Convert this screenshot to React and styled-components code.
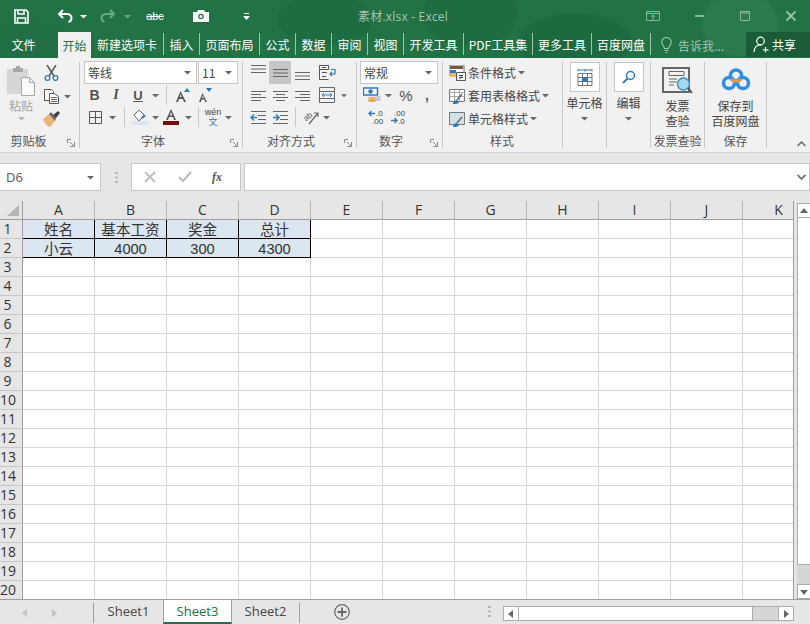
import React from 'react';
import styled, { createGlobalStyle } from 'styled-components';

const CJK = '"Noto Sans CJK SC", "Noto Sans", sans-serif';
const UI = '"Open Sans", "Noto Sans CJK SC", sans-serif';
const SANS = '"Liberation Sans", sans-serif';
const SERIF = '"Liberation Serif", serif';

const Global = createGlobalStyle`
  html, body { margin: 0; padding: 0; background: #e6e6e6; overflow: hidden; }
  * { box-sizing: border-box; }
`;

const Page = styled.div`
  width: 810px;
  height: 624px;
  display: flex;
  flex-direction: column;
  overflow: hidden;
  font-family: ${CJK};
  font-size: 12px;
  color: #444;
`;

const Header = styled.div`
  height: 58px;
  flex: none;
  color: #fff;
  background-color: #217346;
  background-image:
    radial-gradient(ellipse 50px 26px at 325px 20px, #1f6b42 90%, transparent 100%),
    radial-gradient(ellipse 50px 34px at 470px 14px, #1f6b42 90%, transparent 100%),
    radial-gradient(ellipse 60px 30px at 575px 42px, #1e6a40 90%, transparent 100%),
    radial-gradient(ellipse 40px 34px at 740px 24px, #2a7a4e 90%, transparent 100%),
    radial-gradient(ellipse 50px 30px at 30px 50px, #226f45 90%, transparent 100%);
`;

const TitleRow = styled.div`
  height: 32px;
  display: flex;
  align-items: center;
`;

const QatSlot = styled.div`
  width: ${p => p.$w}px;
  height: 32px;
  flex: none;
  margin-left: ${p => p.$ml || 0}px;
  display: flex;
  align-items: center;
  justify-content: center;
  opacity: ${p => (p.$dim ? 0.35 : 1)};
`;

const AbcSlot = styled(QatSlot)`
  font-family: ${SANS};
  font-size: 11px;
  text-decoration: line-through;
`;

const DocTitle = styled.div`
  width: 362px;
  flex: none;
  padding-left: 90px;
  font-family: ${UI};
  font-size: 12px;
  color: #a7c6b4;
  letter-spacing: 0.2px;
  white-space: nowrap;
`;

const TabRow = styled.div`
  height: 26px;
  display: flex;
  align-items: flex-start;
`;

const MenuTab = styled.div`
  width: ${p => p.$w}px;
  height: ${p => (p.$active ? 26 : 22)}px;
  margin-top: ${p => (p.$active ? 0 : 1)}px;
  flex: none;
  display: flex;
  align-items: center;
  justify-content: center;
  white-space: nowrap;
  font-size: 12px;
  color: ${p => (p.$active ? '#217346' : '#fff')};
  background: ${p => (p.$active ? '#f1f1f1' : 'transparent')};
  border-right: ${p => (p.$sep ? '1px solid #9dc2ad' : 'none')};
`;

const Hint = styled.div`
  width: 95px;
  height: 26px;
  flex: none;
  display: flex;
  align-items: center;
  padding-left: 10px;
  gap: 6px;
  color: #a7c6b4;
`;

const ShareBox = styled.div`
  width: 64px;
  height: 25px;
  flex: none;
  display: flex;
  align-items: center;
  gap: 2px;
  padding-left: 7px;
  background: #1a5c38;
  color: #fff;
`;

const Ribbon = styled.div`
  position: relative;
  height: 95px;
  flex: none;
  display: flex;
  background: #f1f1f1;
  border-bottom: 1px solid #d4d4d4;
`;

const Group = styled.div`
  position: relative;
  width: ${p => p.$w}px;
  flex: none;
  display: flex;
  flex-direction: column;
  padding: 3px 0 0 ${p => p.$pl || 0}px;
`;

const GroupBody = styled.div`
  flex: 1;
  display: flex;
  flex-direction: column;
`;

const GroupLabel = styled.div`
  height: 21px;
  flex: none;
  line-height: 19px;
  text-align: center;
  color: #555;
  font-size: 12px;
  white-space: nowrap;
  padding-right: ${p => p.$pr || 0}px;
`;

const GroupSep = styled.div`
  width: 1px;
  flex: none;
  margin: 4px 0 4px;
  background: #c9c9c9;
`;

const Launcher = styled.svg`
  position: absolute;
  right: 4px;
  bottom: 5px;
`;

const CollapseArrow = styled.svg`
  position: absolute;
  right: 4px;
  bottom: 5px;
`;

const ToolRow = styled.div`
  height: ${p => p.$h || 22}px;
  display: flex;
  align-items: center;
  padding-left: ${p => p.$pl || 0}px;
`;

const Tool = styled.div`
  width: ${p => p.$w}px;
  height: ${p => p.$h || 22}px;
  flex: none;
  margin-left: ${p => p.$ml || 0}px;
  display: flex;
  align-items: center;
  justify-content: center;
  background: ${p => (p.$on ? '#c6c6c6' : 'transparent')};
  color: #444;
`;

const Glyph = styled(Tool)`
  font-family: ${p => p.$font || SANS};
  font-size: ${p => p.$size || 14}px;
  font-weight: ${p => (p.$bold ? 700 : 400)};
  font-style: ${p => (p.$italic ? 'italic' : 'normal')};
  text-decoration: ${p => (p.$under ? 'underline' : 'none')};
  color: #505050;
`;

const PhoneticTool = styled(Tool)`
  flex-direction: column;
  font-size: 9px;
  line-height: 10px;
  color: #2d7ab8;
`;

const Pinyin = styled.span`
  font-family: ${SANS};
  color: #444;
`;

const ToolSep = styled.div`
  width: 1px;
  height: 20px;
  flex: none;
  margin: 0 ${p => p.$mx || 0}px;
  background: #c9c9c9;
`;

const Select = styled.div`
  width: ${p => p.$w}px;
  height: 23px;
  flex: none;
  display: flex;
  align-items: center;
  justify-content: space-between;
  padding: 0 5px 0 3px;
  background: #fff;
  border: 1px solid #c6c6c6;
  margin-right: ${p => p.$mr || 0}px;
  font-size: 12px;
  color: #444;
`;

const Paste = styled.div`
  width: 36px;
  margin: 5px 0 0 3px;
  display: flex;
  flex-direction: column;
  align-items: center;
  color: #a3a3a3;
  font-size: 12px;
  line-height: 16px;
  gap: 2px;
`;

const ClipColumn = styled.div`
  display: flex;
  flex-direction: column;
  margin-left: 2px;
`;

const ClipRow = styled.div`
  display: flex;
  flex-direction: row;
`;

const StyleRow = styled.div`
  height: 23px;
  display: flex;
  align-items: center;
  gap: 2px;
  white-space: nowrap;
  color: #444;
`;

const BigBox = styled.div`
  width: 30px;
  height: 30px;
  display: flex;
  align-items: center;
  justify-content: center;
  background: #fff;
  border: 1px solid #c6c6c6;
  margin: 1px 0 3px;
`;

const BigColumn = styled.div`
  display: flex;
  flex-direction: column;
  align-items: center;
  flex: 1;
  line-height: 15px;
  color: #444;
  text-align: center;
`;

const BigIcon = styled.div`
  height: 37px;
  flex: none;
  padding-top: ${p => p.$pt}px;
`;

const CaretLine = styled.div`
  height: 16px;
  display: flex;
  align-items: center;
`;

const FormulaBar = styled.div`
  height: 48px;
  flex: none;
  display: flex;
  align-items: flex-start;
  padding-top: 10px;
  background: #e6e6e6;
`;

const NameBox = styled.div`
  width: 101px;
  height: 28px;
  flex: none;
  display: flex;
  align-items: center;
  justify-content: space-between;
  padding: 0 6px;
  background: #fff;
  border: 1px solid #c6c6c6;
  border-left: none;
  font-family: ${UI};
  font-size: 13px;
  color: #555;
`;

const Grip = styled.div`
  width: 30px;
  height: 28px;
  flex: none;
  display: flex;
  align-items: center;
  justify-content: center;
`;

const FxBox = styled.div`
  width: 110px;
  height: 28px;
  flex: none;
  display: flex;
  align-items: center;
  padding-left: 12px;
  gap: 22px;
  background: #fff;
  border: 1px solid #c6c6c6;
`;

const FxLabel = styled.span`
  margin-left: -2px;
  font-family: ${SERIF};
  font-style: italic;
  font-weight: bold;
  font-size: 12px;
  color: #555;
`;

const FormulaInput = styled.div`
  width: 566px;
  height: 28px;
  flex: none;
  margin-left: 3px;
  display: flex;
  align-items: center;
  justify-content: flex-end;
  padding-right: 3px;
  background: #fff;
  border: 1px solid #c6c6c6;
`;

const SheetArea = styled.div`
  flex: 1;
  min-height: 0;
  display: flex;
  background: #fff;
`;

const Sheet = styled.div`
  width: 794px;
  flex: none;
  display: grid;
  grid-template-columns: 23px repeat(11, 72px);
  grid-auto-rows: 19px;
  overflow: hidden;
  border-right: 1px solid #9f9f9f;
`;

const Corner = styled.div`
  background: #e6e6e6;
  border-right: 1px solid #9f9f9f;
  border-bottom: 1px solid #9f9f9f;
  height: 19px;
  display: flex;
  align-items: flex-end;
  justify-content: flex-end;
  padding: 0 3px 3px 0;
`;

const ColHead = styled.div`
  background: #e6e6e6;
  border-right: 1px solid #b4b4b4;
  border-bottom: 1px solid #9f9f9f;
  text-align: center;
  font-size: 14px;
  line-height: 18px;
  color: #333;
  font-family: ${UI};
`;

const RowHead = styled.div`
  background: #e6e6e6;
  border-right: 1px solid #9f9f9f;
  border-bottom: 1px solid #c6c6c6;
  text-align: center;
  padding-right: 7px;
  font-size: 14px;
  line-height: 18px;
  color: #333;
  font-family: ${UI};
  white-space: nowrap;
`;

const Cell = styled.div`
  border-right: 1px solid ${p => (p.$data ? '#000' : '#d4d4d4')};
  border-bottom: 1px solid ${p => (p.$data ? '#000' : '#d4d4d4')};
  background: ${p => (p.$data ? '#dce6f1' : '#fff')};
  text-align: center;
  font-size: 14.6px;
  line-height: 18px;
  padding-top: ${p => (p.$num ? 1 : 0)}px;
  color: #333;
  white-space: nowrap;
  font-family: ${p => (p.$num ? SANS : CJK)};
`;

const VScroll = styled.div`
  flex: 1;
  display: flex;
  flex-direction: column;
  padding: 2px 0 0 3px;
  background: #e6e6e6;
`;

const VButton = styled.div`
  height: 15px;
  flex: none;
  display: flex;
  align-items: center;
  justify-content: center;
  background: #fff;
  border: 1px solid #ababab;
  border-right: none;
`;

const VThumb = styled.div`
  height: 347px;
  flex: none;
  background: #fff;
  border-left: 1px solid #ababab;
  border-bottom: 1px solid #ababab;
`;

const VTrack = styled.div`
  flex: 1;
  background: #d6d6d6;
`;

const BottomBar = styled.div`
  height: 25px;
  flex: none;
  display: flex;
  background: #e6e6e6;
  border-top: 1px solid #9f9f9f;
`;

const NavArrows = styled.div`
  width: 94px;
  height: 20px;
  flex: none;
  display: flex;
  align-items: center;
  gap: 21px;
  padding-left: 21px;
  margin-top: 3px;
  border-right: 1px solid #9f9f9f;
`;

const SheetTab = styled.div`
  width: ${p => p.$w}px;
  height: ${p => (p.$active ? 25 : 22)}px;
  flex: none;
  display: flex;
  align-items: center;
  justify-content: center;
  margin-top: ${p => (p.$active ? -1 : 0)}px;
  font-family: ${UI};
  font-size: 13px;
  color: ${p => (p.$active ? '#217346' : '#444')};
  background: ${p => (p.$active ? '#fff' : 'transparent')};
  border-top: ${p => (p.$active ? '1px solid #9f9f9f' : 'none')};
  border-left: ${p => (p.$active ? '1px solid #9f9f9f' : 'none')};
  border-right: ${p => (p.$active ? '1px solid #9f9f9f' : 'none')};
  border-bottom: ${p => (p.$active ? '2px solid #217346' : 'none')};
`;

const TabEnd = styled.div`
  width: 1px;
  height: 20px;
  flex: none;
  margin-top: 3px;
  background: #9f9f9f;
`;

const AddSheet = styled.div`
  width: 84px;
  height: 23px;
  flex: none;
  display: flex;
  align-items: center;
  justify-content: center;
`;

const BarGrip = styled.div`
  width: 119px;
  height: 23px;
  flex: none;
  display: flex;
  align-items: center;
  justify-content: flex-end;
  padding-right: 12px;
`;

const HScroll = styled.div`
  width: 291px;
  height: 15px;
  flex: none;
  margin-top: 6px;
  display: flex;
  background: #d6d6d6;
  border: 1px solid #ababab;
`;

const HButton = styled.div`
  width: 15px;
  flex: none;
  display: flex;
  align-items: center;
  justify-content: center;
  background: #fff;
  border-${p => p.$side}: 1px solid #ababab;
`;

const HThumb = styled.div`
  width: 234px;
  flex: none;
  background: #fff;
  border-right: 1px solid #ababab;
`;

const HTrack = styled.div`
  flex: 1;
`;

/* small drawings */

const Caret = ({ c = '#666', s = 5 }) => (
  <svg width={s * 1.4} height={s} viewBox="0 0 7 5"><path d="M0 1h7L3.500 4.600z" fill={c} /></svg>
);

const SaveIcon = () => (
  <svg width="15" height="15" viewBox="0 0 15 15" fill="none" stroke="#fff" strokeWidth="1.600">
    <path d="M1 1h11l2 2v11H1z" />
    <path d="M4 1v4h6V1M3.500 14V9h8v5" />
  </svg>
);

const UndoIcon = () => (
  <svg width="16" height="14" viewBox="0 0 16 14" fill="none" stroke="#fff" strokeWidth="2">
    <path d="M6 1 2 5l4 4" />
    <path d="M2 5h8c3 0 4.500 2 4.500 4s-1 3.500-3 4" />
  </svg>
);

const RedoIcon = () => (
  <svg width="16" height="14" viewBox="0 0 16 14" fill="none" stroke="#fff" strokeWidth="2">
    <path d="m10 1 4 4-4 4" />
    <path d="M14 5H6C3 5 1.500 7 1.500 9s1 3.500 3 4" />
  </svg>
);

const CameraIcon = () => (
  <svg width="16" height="12" viewBox="0 0 16 12">
    <path d="M0 2h4l1-2h6l1 2h4v10H0z" fill="#fff" />
    <circle cx="8" cy="6.500" r="2.800" fill="#217346" />
    <circle cx="8" cy="6.500" r="1.500" fill="#fff" />
  </svg>
);

const QatMenu = () => (
  <svg width="7" height="7" viewBox="0 0 7 7" fill="#fff"><path d="M1 0h5v1H1zM0 3h7L3.500 7z" /></svg>
);

const RestoreIcon = () => (
  <svg width="14" height="10" viewBox="0 0 14 10" fill="none" stroke="#8fb5a0">
    <path d="M.5.500h13v9H.500zM.5 2.500h13M7 9V4.500M5 6l2-2 2 2" />
  </svg>
);

const MaxIcon = () => (
  <svg width="10" height="10" viewBox="0 0 10 10" fill="none" stroke="#8fb5a0">
    <path d="M.5.500h9v9h-9zM.5 2h9" />
  </svg>
);

const MinIcon = () => <svg width="9" height="2" viewBox="0 0 9 2"><path d="M0 0h9v2H0z" fill="#8fb5a0" /></svg>;

const CloseIcon = () => (
  <svg width="10" height="10" viewBox="0 0 10 10" fill="none" stroke="#a3c4b1" strokeWidth="1.800"><path d="m.5.500 9 9m0-9-9 9" /></svg>
);

const BulbIcon = () => (
  <svg width="11" height="17" viewBox="0 0 11 17" fill="none" stroke="#a7c6b4" strokeWidth="1.100">
    <path d="M3.500 11.500C3 9 .8 8 .8 5.200a4.700 4.700 0 0 1 9.400 0c0 2.800-2.200 3.800-2.700 6.300z" />
    <path d="M3.500 13.500h4M4.500 15.500h2" />
  </svg>
);

const PersonIcon = () => (
  <svg width="17" height="17" viewBox="0 0 17 17" fill="none" stroke="#fff" strokeWidth="1.200">
    <circle cx="7.500" cy="5" r="3.800" />
    <path d="M1 16c0-4 2.500-7 5.500-7h2M12.500 11v5.500M10 13.800h5.500" />
  </svg>
);

const PasteIcon = () => (
  <svg width="28" height="30" viewBox="0 0 28 30">
    <path d="M0 3h21v25H0z" fill="#d6d6d6" />
    <path d="M6 2h3V0h4v2h3v4H6z" fill="#a8a8a8" />
    <path d="M14.500 11.500h8l5 5v13h-13z" fill="#fafafa" stroke="#a8a8a8" />
    <path d="M22.500 11.500v5h5" fill="none" stroke="#a8a8a8" />
  </svg>
);

const CutIcon = () => (
  <svg width="15" height="16" viewBox="0 0 15 16" fill="none">
    <path d="m3 0 7 11M12 0 5 11" stroke="#555" strokeWidth="1.500" />
    <circle cx="3.500" cy="13" r="2.400" stroke="#2d7ab8" strokeWidth="1.300" />
    <circle cx="11.500" cy="13" r="2.400" stroke="#2d7ab8" strokeWidth="1.300" />
  </svg>
);

const CopyIcon = () => (
  <svg width="15" height="15" viewBox="0 0 15 15" fill="#fff" stroke="#555">
    <path d="M.5.500h7l2 2v9h-9z" />
    <path d="M5.500 4.500h5l4 3v7h-9z" />
    <path d="M7 8.500h6M7 10.500h6M7 12.500h6" stroke="#2d7ab8" />
  </svg>
);

const BrushIcon = () => (
  <svg width="17" height="16" viewBox="0 0 17 16">
    <path d="M0 8 6 3l6 7-5 6C5 16 0 11 0 8z" fill="#eab676" />
    <path d="m6 3 2-2 5 6-1 3z" fill="#666" />
    <path d="m10 4 5-4 2 2-4 5z" fill="#444" />
  </svg>
);

const BorderIcon = () => (
  <svg width="13" height="13" viewBox="0 0 13 13" fill="none" stroke="#555"><path d="M.5.500h12v12H.500zM6.500.5v12M.5 6.500h12" /></svg>
);

const FillIcon = () => (
  <svg width="17" height="16" viewBox="0 0 17 16">
    <path d="M3 6 8 1l5 5-5 6z" fill="#fff" stroke="#666" />
    <path d="M8 1 13 6l-3 3 1 1 4-3z" fill="#2d7ab8" />
    <path d="M1 12h16v4H1z" fill="#dce6f1" />
  </svg>
);

const FontColor = () => (
  <svg width="16" height="16" viewBox="0 0 16 16">
    <path d="M8 0 3 11h2l1-3h4l1 3h2zM6.800 6.500 8 3l1.200 3.500z" fill="#555" />
    <path d="M0 12h16v4H0z" fill="#7a0a0a" />
  </svg>
);

const GrowFont = ({ up }) => (
  <svg width="15" height="14" viewBox="0 0 15 14">
    <path d={up ? 'M4.500 3 0 14h2l1-3h4l1 3h2zM3.700 9l1-3 1 3z' : 'M4.500 5 1 14h1.800l.7-2.500h3l.8 2.500H9zM4 10l1-3 .8 3z'} fill="#555" />
    <path d={up ? 'M8 4h6l-3-4z' : 'M8 0h6l-3 4z'} fill="#2d7ab8" />
  </svg>
);

const Lines = ({ y0 = 3, rows = [[0, 15], [0, 15], [0, 15]], step = 3.500, w = 15, h = 15 }) => (
  <svg width={w} height={h} viewBox={`0 0 ${w} ${h}`} stroke="#666">
    {rows.map(([a, b], i) => <path key={i} d={`M${a} ${y0 + i * step + 0.500}H${b}`} />)}
  </svg>
);

const WrapIcon = () => (
  <svg width="17" height="16" viewBox="0 0 17 16" fill="none">
    <path d="M.5.500h9v4h-9zM.5 4.500v10h9" stroke="#555" />
    <path d="M3 2.500h4M3 7.500h5M3 11.500h4" stroke="#555" />
    <path d="M12 4.500h4V9h-5m2-2-2 2 2 2" stroke="#2d7ab8" strokeWidth="1.200" />
  </svg>
);

const MergeIcon = () => (
  <svg width="16" height="16" viewBox="0 0 16 16" fill="none">
    <path d="M.5.500h15v15H.500zM.5 4.500h15M.5 11.500h15" stroke="#666" />
    <path d="M3 8h10M5 6 3 8l2 2m6-4 2 2-2 2" stroke="#2d7ab8" />
  </svg>
);

const IndentIcon = ({ out }) => (
  <svg width="16" height="13" viewBox="0 0 16 13" fill="none">
    <path d="M1 .5h15M8 4.500h8M8 8.500h8M1 12.500h15" stroke="#666" />
    {out
      ? <path d="M7 6.500H1m3-3-3 3 3 3" stroke="#2d7ab8" strokeWidth="1.500" />
      : <path d="M1 6.500h6m-3-3 3 3-3 3" stroke="#2d7ab8" strokeWidth="1.500" />}
  </svg>
);

const AngleIcon = () => (
  <svg width="18" height="16" viewBox="0 0 18 16" fill="none">
    <text x="1" y="10" fontSize="8" fontFamily="Liberation Sans" fill="#555" transform="rotate(-40 6 7)">ab</text>
    <path d="M7 15 16 4m-4 0h4v4" stroke="#666" strokeWidth="1.200" />
  </svg>
);

const MoneyIcon = () => (
  <svg width="18" height="17" viewBox="0 0 18 17">
    <path d="M.5 1h14v7H.500z" fill="#fff" stroke="#2d7ab8" strokeWidth="1.500" />
    <circle cx="7.500" cy="4.500" r="2.200" fill="#2d7ab8" />
    <ellipse cx="9" cy="11" rx="4" ry="1.500" fill="#eab676" />
    <ellipse cx="9" cy="13.500" rx="4" ry="1.500" fill="#e5a552" />
    <ellipse cx="15" cy="10" rx="3" ry="1.300" fill="#ccc" />
    <ellipse cx="15" cy="12.500" rx="3" ry="1.300" fill="#bbb" />
  </svg>
);

const DecimalIcon = ({ more }) => (
  <svg width="16" height="15" viewBox="0 0 16 15" fill="none">
    <path d={more ? 'M7 3.500H1m2.500-2.500L1 3.500 3.500 6' : 'M1 10.500h6m-2.500-2.500L7 10.500 4.500 13'} stroke="#2d7ab8" strokeWidth="1.300" />
    <text x={more ? 8 : 4} y="6" fontSize="8" fontFamily="Liberation Sans" fill="#444">{more ? '.0' : '.00'}</text>
    <text x={more ? 4 : 8} y="14" fontSize="8" fontFamily="Liberation Sans" fill="#444">{more ? '.00' : '.0'}</text>
  </svg>
);

const CondIcon = () => (
  <svg width="17" height="16" viewBox="0 0 17 16">
    <path d="M0 0h15v10H0z" fill="#fff" stroke="#777" />
    <path d="M1 1h13v3H1z" fill="#7a5a3a" />
    <path d="M1 5h6v3H1z" fill="#2d7ab8" />
    <path d="M1 8h6v4H1z" fill="#eab676" />
    <path d="M7.500 7.500h9v8h-9z" fill="#fff" stroke="#555" />
    <path d="M10 10.500h4M10 12.500h4M13 9.500l-2 4.500" stroke="#555" fill="none" />
  </svg>
);

const TableIcon = ({ fill }) => (
  <svg width="17" height="16" viewBox="0 0 17 16" fill="none">
    <path d="M.5 1.500h15v12H.500z" fill={fill} stroke="#777" />
    <path d="M.5 4.500h15M.5 8.500h15M5.500 1.500v12M10.500 1.500v12" stroke={fill === '#fff' ? '#aaa' : 'none'} />
    <path d="m13 6-5 6" stroke="#666" strokeWidth="1.500" />
    <path d="M4 16c0-3 2-4 4-4l2 2c-1 2-3 2-6 2z" fill="#2d7ab8" />
  </svg>
);

const CellsIcon = () => (
  <svg width="16" height="17" viewBox="0 0 16 17" fill="none" stroke="#777">
    <path d="M1 1h14M1 0v2.500M8 0v2.500M15 0v2.500" stroke="#2d7ab8" />
    <path d="M1 4.500h14v12H1zM1 8.500h14M1 12.500h14M5.500 4.500v12M10.500 4.500v12" />
    <path d="M5.500 8.500h5v4h-5z" fill="#2d7ab8" stroke="#2d7ab8" />
  </svg>
);

const SearchIcon = () => (
  <svg width="14" height="15" viewBox="0 0 14 15" fill="none">
    <circle cx="8.500" cy="5.500" r="4" stroke="#2d7ab8" strokeWidth="1.500" />
    <path d="M5.500 8.500 1 13" stroke="#2d7ab8" strokeWidth="2" />
  </svg>
);

const InvoiceIcon = () => (
  <svg width="32" height="27" viewBox="0 0 32 27" fill="none">
    <path d="M1 1h26v24H1z" stroke="#666" strokeWidth="2" />
    <path d="M1 4v18" stroke="#666" strokeWidth="2" strokeDasharray="2 2" />
    <path d="M7 4.500h15v4H7z" stroke="#666" />
    <path d="M7 12h8M7 15h8M7 18h5" stroke="#666" />
    <circle cx="21.500" cy="17" r="6" fill="#a8d8f0" stroke="#3d8fc4" strokeWidth="1.500" />
    <path d="m26 21 4 5" stroke="#555" strokeWidth="2" />
  </svg>
);

const BaiduIcon = () => (
  <svg width="30" height="23" viewBox="0 0 30 23" fill="none">
    <circle cx="8" cy="15" r="5.500" stroke="#2f8fe0" strokeWidth="3.500" />
    <circle cx="22" cy="15" r="5.500" stroke="#2f8fe0" strokeWidth="3.500" />
    <circle cx="15" cy="7.500" r="5.500" stroke="#2f8fe0" strokeWidth="3.500" />
    <path d="M10 11c2 3 8 3 10 0" stroke="#e49a55" strokeWidth="3" />
  </svg>
);

const XMark = () => (
  <svg width="12" height="12" viewBox="0 0 12 12" fill="none" stroke="#bdbdbd" strokeWidth="1.800"><path d="m1 1 10 10m0-10L1 11" /></svg>
);

const CheckMark = () => (
  <svg width="14" height="12" viewBox="0 0 14 12" fill="none" stroke="#bdbdbd" strokeWidth="2.200"><path d="m1 6 4 4 8-9" /></svg>
);

const GripDots = ({ c = '#b5b5b5' }) => (
  <svg width="3" height="11" viewBox="0 0 3 11" fill={c}><path d="M0 0h3v2H0zM0 4.500h3v2H0zM0 9h3v2H0z" /></svg>
);

const Tri = ({ dir, c = '#666', s = 8 }) => {
  const d = { up: 'M0 6h8L4 1z', down: 'M0 2h8L4 7z', left: 'M6 0v8L1 4z', right: 'M2 0v8l5-4z' }[dir];
  return <svg width={s} height={s} viewBox="0 0 8 8"><path d={d} fill={c} /></svg>;
};

const LauncherIcon = () => (
  <Launcher width="8" height="8" viewBox="0 0 8 8" fill="none" stroke="#888">
    <path d="M.5 4V.5H4M7.500 3v4.500H3M3 3l4 4" />
  </Launcher>
);

const columns = ['A', 'B', 'C', 'D', 'E', 'F', 'G', 'H', 'I', 'J', 'K'];
const tabs = [
  ['新建选项卡', 73], ['插入', 36], ['页面布局', 60], ['公式', 36], ['数据', 36], ['审阅', 36],
  ['视图', 36], ['开发工具', 60], ['PDF工具集', 69], ['更多工具', 59], ['百度网盘', 59],
];
const data = [
  ['姓名', '基本工资', '奖金', '总计'],
  ['小云', '4000', '300', '4300'],
];
const rows = Array.from({ length: 20 }, (_, i) => i);

const App = () => (
  <Page>
    <Global />
    <Header>
      <TitleRow>
        <QatSlot $w={42}><SaveIcon /></QatSlot>
        <QatSlot $w={28} $ml={9}><UndoIcon /></QatSlot>
        <QatSlot $w={8}><Caret c="#fff" /></QatSlot>
        <QatSlot $w={28} $ml={7} $dim><RedoIcon /></QatSlot>
        <QatSlot $w={10} $dim><Caret c="#fff" /></QatSlot>
        <AbcSlot $w={46}>abc</AbcSlot>
        <QatSlot $w={46}><CameraIcon /></QatSlot>
        <QatSlot $w={44}><QatMenu /></QatSlot>
        <DocTitle>素材.xlsx - Excel</DocTitle>
        <QatSlot $w={46}><RestoreIcon /></QatSlot>
        <QatSlot $w={46}><MinIcon /></QatSlot>
        <QatSlot $w={46}><MaxIcon /></QatSlot>
        <QatSlot $w={46}><CloseIcon /></QatSlot>
      </TitleRow>
      <TabRow>
        <MenuTab $w={47}>文件</MenuTab>
        <MenuTab $w={11} />
        <MenuTab $w={33} $active>开始</MenuTab>
        {tabs.map(([label, w]) => <MenuTab key={label} $w={w} $sep>{label}</MenuTab>)}
        <Hint><BulbIcon />告诉我...</Hint>
        <ShareBox><PersonIcon />共享</ShareBox>
      </TabRow>
    </Header>

    <Ribbon>
      <Group $w={79}>
        <GroupBody>
          <ClipRow>
            <Paste>
              <PasteIcon />
              <span>粘贴</span>
              <Caret c="#b5b5b5" />
            </Paste>
            <ClipColumn>
              <Tool $w={20} $h={24}><CutIcon /></Tool>
              <ToolRow $h={22}><Tool $w={20}><CopyIcon /></Tool><Tool $w={12}><Caret /></Tool></ToolRow>
              <Tool $w={20} $h={24}><BrushIcon /></Tool>
            </ClipColumn>
          </ClipRow>
        </GroupBody>
        <GroupLabel $pr={22}>剪贴板</GroupLabel>
        <LauncherIcon />
      </Group>
      <GroupSep />

      <Group $w={162} $pl={4}>
        <GroupBody>
          <ToolRow $h={23}>
            <Select $w={113} $mr={1}>等线<Caret /></Select>
            <Select $w={40}>11<Caret /></Select>
          </ToolRow>
          <ToolRow>
            <Glyph $w={21} $bold>B</Glyph>
            <Glyph $w={22} $font={SERIF} $bold $italic>I</Glyph>
            <Glyph $w={22} $bold $under $size={13}>U</Glyph>
            <Tool $w={12}><Caret /></Tool>
            <ToolSep $mx={5} />
            <Tool $w={22}><GrowFont up /></Tool>
            <Tool $w={22}><GrowFont /></Tool>
          </ToolRow>
          <ToolRow>
            <Tool $w={16} $ml={3}><BorderIcon /></Tool>
            <Tool $w={18}><Caret /></Tool>
            <ToolSep $mx={3} />
            <Tool $w={22}><FillIcon /></Tool>
            <Tool $w={10}><Caret /></Tool>
            <Tool $w={22}><FontColor /></Tool>
            <Tool $w={12}><Caret /></Tool>
            <ToolSep $mx={4} />
            <PhoneticTool $w={20}>
              <Pinyin>wén</Pinyin>文
            </PhoneticTool>
            <Tool $w={10}><Caret /></Tool>
          </ToolRow>
        </GroupBody>
        <GroupLabel $pr={20}>字体</GroupLabel>
        <LauncherIcon />
      </Group>
      <GroupSep />

      <Group $w={113} $pl={4}>
        <GroupBody>
          <ToolRow $h={23}>
            <Tool $w={22} $h={23}><Lines y0={0} /></Tool>
            <Tool $w={22} $h={23} $on><Lines y0={4} /></Tool>
            <Tool $w={22} $h={23}><Lines y0={7} /></Tool>
            <Tool $w={28} $h={23}><WrapIcon /></Tool>
          </ToolRow>
          <ToolRow>
            <Tool $w={22}><Lines y0={3} rows={[[0, 15], [0, 10], [0, 15], [0, 10]]} step={3} /></Tool>
            <Tool $w={22}><Lines y0={3} rows={[[0, 15], [3, 12], [0, 15], [3, 12]]} step={3} /></Tool>
            <Tool $w={22}><Lines y0={3} rows={[[0, 15], [5, 15], [0, 15], [5, 15]]} step={3} /></Tool>
            <Tool $w={28}><MergeIcon /></Tool>
            <Tool $w={6}><Caret /></Tool>
          </ToolRow>
          <ToolRow>
            <Tool $w={22}><IndentIcon out /></Tool>
            <Tool $w={22}><IndentIcon /></Tool>
            <ToolSep $mx={4} />
            <Tool $w={22}><AngleIcon /></Tool>
            <Tool $w={8}><Caret /></Tool>
          </ToolRow>
        </GroupBody>
        <GroupLabel $pr={21}>对齐方式</GroupLabel>
        <LauncherIcon />
      </Group>
      <GroupSep />

      <Group $w={85} $pl={3}>
        <GroupBody>
          <Select $w={78}>常规<Caret /></Select>
          <ToolRow>
            <Tool $w={24}><MoneyIcon /></Tool>
            <Tool $w={8}><Caret /></Tool>
            <Glyph $w={28} $size={15}>%</Glyph>
            <Glyph $w={14} $bold>,</Glyph>
          </ToolRow>
          <ToolRow $pl={5}>
            <Tool $w={22}><DecimalIcon more /></Tool>
            <Tool $w={22}><DecimalIcon /></Tool>
          </ToolRow>
        </GroupBody>
        <GroupLabel $pr={20}>数字</GroupLabel>
        <LauncherIcon />
      </Group>
      <GroupSep />

      <Group $w={119} $pl={6}>
        <GroupBody>
          <StyleRow><CondIcon />条件格式<Caret /></StyleRow>
          <StyleRow><TableIcon fill="#fff" />套用表格格式<Caret /></StyleRow>
          <StyleRow><TableIcon fill="#cfe3e6" />单元格样式<Caret /></StyleRow>
        </GroupBody>
        <GroupLabel $pr={7}>样式</GroupLabel>
      </Group>
      <GroupSep />

      <Group $w={43}>
        <BigColumn>
          <BigBox><CellsIcon /></BigBox>
          单元格
          <CaretLine><Caret /></CaretLine>
        </BigColumn>
      </Group>
      <GroupSep />

      <Group $w={43}>
        <BigColumn>
          <BigBox><SearchIcon /></BigBox>
          编辑
          <CaretLine><Caret /></CaretLine>
        </BigColumn>
      </Group>
      <GroupSep />

      <Group $w={53}>
        <BigColumn>
          <BigIcon $pt={6}><InvoiceIcon /></BigIcon>
          <span>发票<br />查验</span>
        </BigColumn>
        <GroupLabel>发票查验</GroupLabel>
      </Group>
      <GroupSep />

      <Group $w={61}>
        <BigColumn>
          <BigIcon $pt={7}><BaiduIcon /></BigIcon>
          <span>保存到<br />百度网盘</span>
        </BigColumn>
        <GroupLabel>保存</GroupLabel>
      </Group>
      <GroupSep />

      <CollapseArrow width="9" height="6" viewBox="0 0 9 6" fill="none" stroke="#666" strokeWidth="1.500">
        <path d="m.5 5 4-4 4 4" />
      </CollapseArrow>
    </Ribbon>

    <FormulaBar>
      <NameBox>D6<Caret /></NameBox>
      <Grip><GripDots /></Grip>
      <FxBox><XMark /><CheckMark /><FxLabel>fx</FxLabel></FxBox>
      <FormulaInput>
        <svg width="9" height="6" viewBox="0 0 9 6" fill="none" stroke="#777" strokeWidth="1.800"><path d="m.5 1 4 4 4-4" /></svg>
      </FormulaInput>
    </FormulaBar>

    <SheetArea>
      <Sheet>
        <Corner>
          <svg width="12" height="11" viewBox="0 0 12 11"><path d="M0 11h12V0z" fill="#b5b5b5" /></svg>
        </Corner>
        {columns.map(c => <ColHead key={c}>{c}</ColHead>)}
        {rows.map(r => (
          <React.Fragment key={r}>
            <RowHead>{r + 1}</RowHead>
            {columns.map((c, i) => {
              const value = data[r] && data[r][i];
              return (
                <Cell key={c} $data={!!value} $num={/^\d+$/.test(value || '')}>{value}</Cell>
              );
            })}
          </React.Fragment>
        ))}
      </Sheet>
      <VScroll>
        <VButton><Tri dir="up" /></VButton>
        <VThumb />
        <VTrack />
        <VButton><Tri dir="down" /></VButton>
      </VScroll>
    </SheetArea>

    <BottomBar>
      <NavArrows>
        <Tri dir="left" c="#c4c4c4" />
        <Tri dir="right" c="#c4c4c4" />
      </NavArrows>
      <SheetTab $w={69}>Sheet1</SheetTab>
      <SheetTab $w={69} $active>Sheet3</SheetTab>
      <SheetTab $w={67}>Sheet2</SheetTab>
      <TabEnd />
      <AddSheet>
        <svg width="16" height="16" viewBox="0 0 16 16" fill="none" stroke="#666">
          <circle cx="8" cy="8" r="7.300" strokeWidth="1.200" />
          <path d="M8 3.500v9M3.500 8h9" strokeWidth="1.800" />
        </svg>
      </AddSheet>
      <BarGrip><GripDots /></BarGrip>
      <HScroll>
        <HButton $side="right"><Tri dir="left" /></HButton>
        <HThumb />
        <HTrack />
        <HButton $side="left"><Tri dir="right" /></HButton>
      </HScroll>
    </BottomBar>
  </Page>
);

export default App;
